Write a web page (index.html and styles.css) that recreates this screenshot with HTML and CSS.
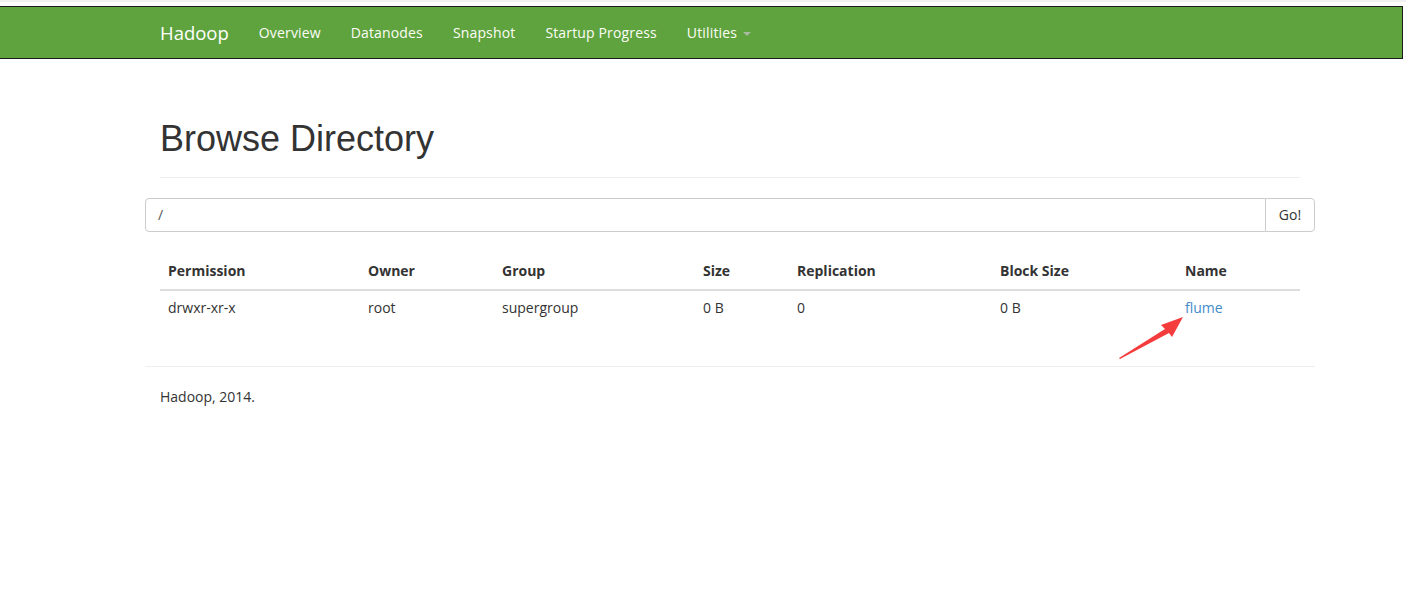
FILE: index.html
```html
<!DOCTYPE html>
<html>
<head>
<meta charset="utf-8">
<title>Browsing HDFS</title>
<link rel="stylesheet" href="styles.css">
</head>
<body>
<div class="topgap"></div>
<header class="navbar">
  <div class="nav-inner">
    <a class="brand" href="#">Hadoop</a>
    <ul class="nav">
      <li><a href="#">Overview</a></li>
      <li><a href="#">Datanodes</a></li>
      <li><a href="#">Snapshot</a></li>
      <li><a href="#">Startup Progress</a></li>
      <li><a href="#">Utilities <span class="caret"></span></a></li>
    </ul>
  </div>
</header>
<main class="container">
  <div class="page-header">
    <h1>Browse Directory</h1>
  </div>
  <div class="input-group">
    <div class="path-input">/</div>
    <button class="go-btn" type="button">Go!</button>
  </div>
  <div class="table-wrap">
    <table class="table">
      <thead>
        <tr>
          <th class="c1">Permission</th>
          <th class="c2">Owner</th>
          <th class="c3">Group</th>
          <th class="c4">Size</th>
          <th class="c5">Replication</th>
          <th class="c6">Block Size</th>
          <th class="c7">Name</th>
        </tr>
      </thead>
      <tbody>
        <tr>
          <td>drwxr-xr-x</td>
          <td>root</td>
          <td>supergroup</td>
          <td>0 B</td>
          <td>0</td>
          <td>0 B</td>
          <td><a class="link" href="#">flume</a></td>
        </tr>
      </tbody>
    </table>
    <svg class="arrow" width="80" height="50" viewBox="0 0 80 50">
      <polygon points="0,42 46,13 42,9 64,1 53,21 50,17 1,43" fill="#f43c3c"/>
    </svg>
  </div>
  <hr class="footer-rule">
  <footer class="footer">
    <p>Hadoop, 2014.</p>
  </footer>
</main>
</body>
</html>
```
FILE: styles.css
```css
* { box-sizing: border-box; }
html, body { margin: 0; padding: 0; background: #fff; }
body {
  font-family: "Open Sans", "Liberation Sans", Arial, sans-serif;
  font-size: 14px;
  line-height: 20px;
  color: #333;
  width: 1406px;
}
.topgap {
  height: 6px;
  background: linear-gradient(#f1f1f1 0, #f1f1f1 2px, #fff 2px);
}
.navbar {
  width: 1403px;
  height: 53px;
  background: #5fa33e;
  border: 1px solid #1a1a1a;
  border-left: none;
}
.nav-inner {
  margin-left: 145px;
  padding-left: 15px;
  display: flex;
  align-items: center;
  height: 51px;
}
.brand {
  color: #fff;
  font-size: 18.5px;
  text-decoration: none;
  line-height: 20px;
  padding-right: 15px;
}
.nav {
  display: flex;
  list-style: none;
  margin: 0;
  padding: 0;
}
.nav a {
  display: block;
  color: #fdfdf8;
  text-decoration: none;
  padding: 0 15px;
  line-height: 20px;
  letter-spacing: 0.15px;
}
.caret {
  display: inline-block;
  width: 0;
  height: 0;
  margin-left: 2px;
  vertical-align: middle;
  border-top: 4px solid #a9b9a0;
  border-left: 4px solid transparent;
  border-right: 4px solid transparent;
}
.container {
  width: 1170px;
  margin-left: 145px;
}
.page-header {
  margin: 0 15px 20px;
  padding-top: 40px;
  padding-bottom: 8px;
  border-bottom: 1px solid #eee;
}
.page-header h1 {
  margin: 20px 0 10px;
  font-family: "Liberation Sans", Arial, sans-serif;
  font-size: 36px;
  line-height: 39.6px;
  font-weight: 500;
}
.input-group {
  display: flex;
  height: 34px;
}
.path-input {
  flex: 1;
  border: 1px solid #ccc;
  border-radius: 4px 0 0 4px;
  padding: 6px 12px;
  line-height: 20px;
  color: #555;
}
.go-btn {
  width: 50px;
  border: 1px solid #ccc;
  margin-left: -1px;
  border-radius: 0 4px 4px 0;
  background: #fff;
  font-family: inherit;
  font-size: 14px;
  color: #333;
  padding: 0;
}
.table-wrap {
  position: relative;
  margin: 21px 15px 0;
  padding-bottom: 39px;
}
.table {
  width: 1140px;
  border-collapse: collapse;
  table-layout: fixed;
}
.table th, .table td {
  text-align: left;
  padding: 8px;
  line-height: 20px;
  vertical-align: top;
}
.table td { padding-top: 7px; padding-bottom: 9px; }
.table th {
  font-weight: 700;
  border-bottom: 2px solid #ddd;
}
.c1 { width: 200px; }
.c2 { width: 134px; }
.c3 { width: 201px; }
.c4 { width: 94px; }
.c5 { width: 203px; }
.c6 { width: 185px; }
.c7 { width: 123px; }
.link { color: #428bca; text-decoration: none; }
.arrow {
  position: absolute;
  left: 959px;
  top: 63px;
}
.footer-rule {
  margin: 0;
  border: 0;
  border-top: 1px solid #eee;
}
.footer {
  padding: 0 15px;
}
.footer p {
  margin: 20px 0;
}
```
